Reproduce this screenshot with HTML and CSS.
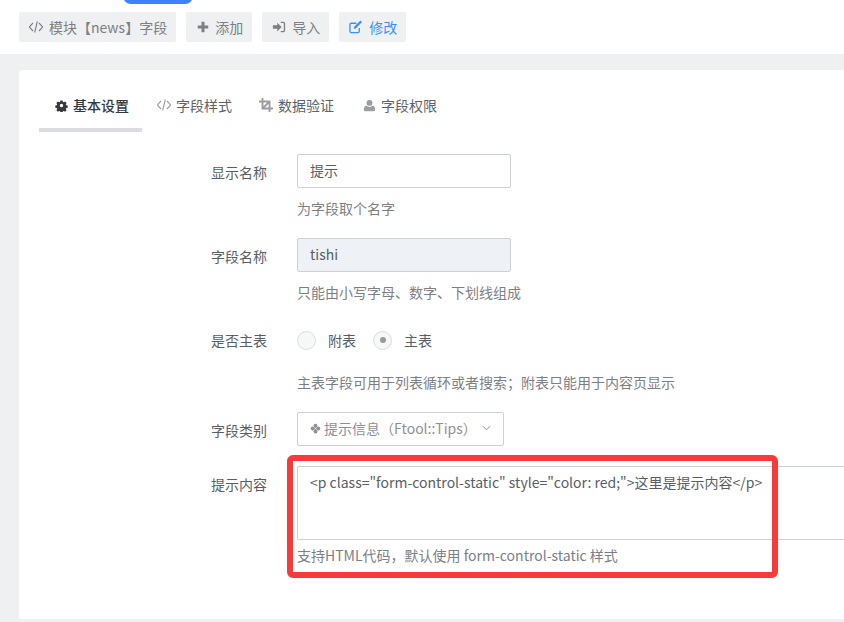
FILE: index.html
```html
<!DOCTYPE html>
<html lang="zh">
<head>
<meta charset="utf-8">
<title>字段</title>
<link rel="stylesheet" href="styles.css">
</head>
<body>
<header class="top">
  <div class="pill"></div>
  <nav class="toolbar">
    <a class="tbtn"><svg class="ic" viewBox="1 1 14 14"><path d="M5 4 1.200 8 5 12M11 4l3.800 4L11 12M9.300 2.500 6.700 13.500" fill="none" stroke="currentColor" stroke-width="1.100"/></svg>模块【news】字段</a>
    <a class="tbtn"><svg class="ic" viewBox="0 0 16 16"><path d="M6.300 2h3.400v4.300H14v3.400H9.700V14H6.300V9.700H2V6.300h4.300z" fill="currentColor"/></svg>添加</a>
    <a class="tbtn"><svg class="ic" viewBox="0 0 16 16"><path d="M1 6h5V3l5 5-5 5v-3H1zM10 2h3a2 2 0 0 1 2 2v8a2 2 0 0 1-2 2h-3v-1.500h2.700a.8.8 0 0 0 .8-.8V4.300a.8.8 0 0 0-.8-.8H10z" fill="currentColor"/></svg>导入</a>
    <a class="tbtn active"><svg class="ic" viewBox="1 1 15 15"><path d="M12 9.500V13a1.500 1.500 0 0 1-1.500 1.500h-7A1.500 1.500 0 0 1 2 13V6a1.500 1.500 0 0 1 1.500-1.500H9" fill="none" stroke="currentColor" stroke-width="1.400"/><path d="M13.300 1.500 15 3.200 8.300 10l-2.300.5.500-2.300z" fill="currentColor"/></svg>修改</a>
  </nav>
</header>
<main class="stage">
  <section class="card">
    <ul class="tabs">
      <li class="tab current"><svg class="ic" viewBox="0 0 16 16"><path fill-rule="evenodd" d="M6.500 1h3l.4 2 1.300.6 1.800-1.100 2 2.100-1.100 1.700.6 1.300 2 .4v3l-2 .4-.6 1.300 1.100 1.700-2 2.100-1.800-1.100-1.300.6-.4 2h-3l-.4-2-1.300-.6-1.800 1.100-2-2.100 1.100-1.700-.6-1.300-2-.4v-3l2-.4.600-1.300-1.100-1.700 2-2.100 1.800 1.100 1.300-.6zM8 5.700a2.300 2.300 0 1 0 0 4.600 2.300 2.300 0 0 0 0-4.600z" transform="translate(.8 .8) scale(.9)" fill="currentColor"/></svg>基本设置</li>
      <li class="tab"><svg class="ic" viewBox="1 1 14 14"><path d="M5 4 1.200 8 5 12M11 4l3.800 4L11 12M9.300 2.500 6.700 13.500" fill="none" stroke="currentColor" stroke-width="1.100"/></svg>字段样式</li>
      <li class="tab"><svg class="ic" viewBox="0 0 16 16"><path d="M4 0v12h12M0 4h12v12M4 12l8-8" fill="none" stroke="currentColor" stroke-width="2.200"/></svg>数据验证</li>
      <li class="tab"><svg class="ic" viewBox="0 0 16 16"><circle cx="8" cy="4.800" r="3.600" fill="currentColor"/><path d="M2.500 15c-1 0-1.500-.6-1.500-1.700 0-2.800.8-5 3.300-5 1 .9 2.200 1.400 3.700 1.400s2.700-.5 3.700-1.400c2.500 0 3.300 2.200 3.300 5 0 1.100-.5 1.700-1.500 1.700z" fill="currentColor"/></svg>字段权限</li>
    </ul>
    <form class="form">
      <div class="row r1">
        <label class="lbl">显示名称</label>
        <div class="ctrl">
          <div class="input">提示</div>
          <p class="help">为字段取个名字</p>
        </div>
      </div>
      <div class="row r2">
        <label class="lbl">字段名称</label>
        <div class="ctrl">
          <div class="input readonly">tishi</div>
          <p class="help">只能由小写字母、数字、下划线组成</p>
        </div>
      </div>
      <div class="row r3">
        <label class="lbl">是否主表</label>
        <div class="ctrl">
          <div class="radios">
            <span class="radio"></span><span class="rtext">附表</span>
            <span class="radio on"></span><span class="rtext">主表</span>
          </div>
          <p class="help help-far">主表字段可用于列表循环或者搜索；附表只能用于内容页显示</p>
        </div>
      </div>
      <div class="row r4">
        <label class="lbl">字段类别</label>
        <div class="ctrl">
          <div class="select"><svg class="ic-s" viewBox="0 0 16 16"><path d="M8 1a2.800 2.800 0 0 1 2.300 4.400L8 7.600 5.700 5.400A2.800 2.800 0 0 1 8 1zM1 8a2.800 2.800 0 0 1 4.400-2.300L7.600 8l-2.200 2.300A2.800 2.800 0 0 1 1 8zm14 0a2.800 2.800 0 0 1-4.400 2.300L8.400 8l2.200-2.300A2.800 2.800 0 0 1 15 8zM8 8.400l2.300 2.300A2.800 2.800 0 1 1 5.700 10.700z" fill="currentColor"/></svg>提示信息（Ftool::Tips）<svg class="caret" viewBox="0 0 10 6"><path d="M1 1l4 4 4-4" fill="none" stroke="currentColor" stroke-width="1.100"/></svg></div>
        </div>
      </div>
      <div class="row r5">
        <label class="lbl">提示内容</label>
        <div class="ctrl">
          <div class="textarea">&lt;p class="form-control-static" style="color: red;"&gt;这里是提示内容&lt;/p&gt;</div>
          <p class="help help-near">支持HTML代码，默认使用 form-control-static 样式</p>
        </div>
      </div>
    </form>
    <div class="mark"></div>
  </section>
</main>
</body>
</html>
```
FILE: styles.css
```css
* { box-sizing: border-box; }
html, body { margin: 0; padding: 0; height: 622px; overflow: hidden; }
body {
  width: 844px;
  background: #fff;
  color: #575e66;
  font: 14px/20px "Noto Sans CJK SC", sans-serif;
}
.top { position: relative; height: 54px; padding: 12px 0 0 19px; background: #fff; }
.pill {
  position: absolute; left: 123px; top: -6px;
  width: 70px; height: 10px;
  background: #3f82ff; border-radius: 0 0 8px 8px;
}
.toolbar { display: flex; gap: 10px; }
.tbtn {
  display: flex; align-items: center;
  height: 30px; padding: 0 9px 0 10px;
  background: #eef0f2; color: #7d7f82; border-radius: 2px;
}
.tbtn .ic { width: 14px; height: 14px; margin-right: 6px; }
.tbtn:nth-child(2) .ic { margin-right: 5px; }
.tbtn.active { color: #3f8dff; }
.stage { height: 568px; padding: 16px 0 0 19px; background: #eef0f2; }
.card {
  position: relative;
  width: 825px; height: 549px;
  background: #fff; border-radius: 3px 0 0 3px;
  padding: 20px 0 0 20px;
  overflow: hidden;
}
.tabs { display: flex; list-style: none; margin: 0; padding: 0; height: 42px; }
.tab {
  display: flex; align-items: center;
  height: 42px; padding: 0 14px 12px 13px;
  color: #5e6266;
}
.tab .ic { width: 14px; height: 14px; margin-right: 5px; color: #9b9fa3; }
.tab:nth-child(2) { padding-left: 0; }
.tab:nth-child(4) { padding-left: 15px; }
.tab:nth-child(4) .ic { width: 13px; height: 13px; margin-right: 5px; }
.tab.current {
  padding: 0 13px 8px 16px; margin-right: 15px;
  border-bottom: 4px solid #dcdde0;
  font-weight: 500; color: #35393e;
}
.tab.current .ic { width: 13px; height: 13px; color: #35393e; margin-right: 5px; }
.form { padding-top: 22px; }
.row { display: flex; }
.lbl { flex: 0 0 228px; text-align: right; padding: 8px 0 0; color: #575e66; margin-right: 30px; white-space: nowrap; }
.ctrl { flex: 1; min-width: 0; }
.input {
  width: 214px; height: 34px;
  padding: 5px 12px;
  border: 1px solid #cfd0d3; border-radius: 2px;
  color: #575e66; background: #fff;
}
.input.readonly { background: #eef1f5; }
.help { margin: 0; color: #7c8086; }
.r1 .help, .r2 .help { margin-top: 10px; }
.r1 { height: 84px; }
.r2 { height: 84px; }
.r3 { height: 90px; }
.r4 { height: 54px; }
.radios { display: flex; align-items: center; height: 20px; margin-top: 8px; }
.radio {
  width: 19px; height: 19px; border-radius: 50%;
  border: 1px solid #dcdde0; background: #f6f7f8;
  display: flex; align-items: center; justify-content: center;
  margin-right: 12px;
}
.radio.on::after { content: ""; width: 6px; height: 6px; border-radius: 50%; background: #999; }
.rtext { margin-right: 17px; padding-bottom: 1px; }
.help-far { margin-top: 22px; }
.select {
  display: inline-flex; align-items: center;
  width: 207px; height: 34px; padding: 0 12px 2px;
  border: 1px solid #cfd0d3; border-radius: 2px;
  color: #8d9095; white-space: nowrap;
}
.ic-s { width: 11px; height: 11px; margin-right: 3px; flex: none; }
.caret { width: 9px; height: 6px; margin-left: 5px; flex: none; }
.textarea {
  width: 100%; height: 74px; padding: 5px 12px;
  border: 1px solid #cfd0d3; border-right: 0; border-radius: 2px 0 0 2px;
  color: #575e66; white-space: nowrap;
}
.help-near { margin-top: 5px; }
.mark {
  position: absolute; left: 268px; top: 385px;
  width: 491px; height: 123px;
  border: 6px solid #f93a3a; border-radius: 6px;
}
```
